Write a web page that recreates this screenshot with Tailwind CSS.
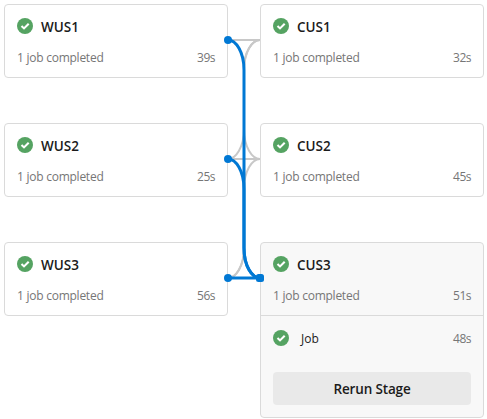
<!DOCTYPE html>
<html lang="en">
<head>
<meta charset="utf-8">
<title>Stages</title>
<script src="https://cdn.jsdelivr.net/npm/@tailwindcss/browser@4"></script>
</head>
<body class="bg-white overflow-hidden font-['Open_Sans','Noto_Sans',sans-serif] text-[#1b1b1b]">
<svg class="hidden">
  <symbol id="ok" viewBox="0 0 16 16"><circle cx="8" cy="8" r="8" fill="#55a362"/><path d="M4.5 8 7 10.4 11.7 5.7" fill="none" stroke="#fff" stroke-width="2.1"/></symbol>
</svg>
<main class="relative w-[487px] h-[419px] pl-1 pt-1 flex gap-8">
  <div class="w-56 flex flex-col gap-[45px]">
    <section class="h-[74px] rounded border border-[#dadada] px-3 pt-[13px]">
      <div class="flex items-center gap-2 h-4"><svg class="size-4"><use href="#ok"/></svg><h2 class="text-[13.5px] leading-4 font-semibold relative top-px">WUS1</h2></div>
      <div class="mt-4 flex justify-between text-xs leading-4 text-[#767676]"><span class="tracking-[-0.25px]">1 job completed</span><span class="tracking-[-0.5px]">39s</span></div>
    </section>
    <section class="h-[74px] rounded border border-[#dadada] px-3 pt-[13px]">
      <div class="flex items-center gap-2 h-4"><svg class="size-4"><use href="#ok"/></svg><h2 class="text-[13.5px] leading-4 font-semibold relative top-px">WUS2</h2></div>
      <div class="mt-4 flex justify-between text-xs leading-4 text-[#767676]"><span class="tracking-[-0.25px]">1 job completed</span><span class="tracking-[-0.5px]">25s</span></div>
    </section>
    <section class="h-[74px] rounded border border-[#dadada] px-3 pt-[13px]">
      <div class="flex items-center gap-2 h-4"><svg class="size-4"><use href="#ok"/></svg><h2 class="text-[13.5px] leading-4 font-semibold relative top-px">WUS3</h2></div>
      <div class="mt-4 flex justify-between text-xs leading-4 text-[#767676]"><span class="tracking-[-0.25px]">1 job completed</span><span class="tracking-[-0.5px]">56s</span></div>
    </section>
  </div>
  <div class="w-56 flex flex-col gap-[45px]">
    <section class="h-[74px] rounded border border-[#dadada] px-3 pt-[13px]">
      <div class="flex items-center gap-2 h-4"><svg class="size-4"><use href="#ok"/></svg><h2 class="text-[13.5px] leading-4 font-semibold relative top-px">CUS1</h2></div>
      <div class="mt-4 flex justify-between text-xs leading-4 text-[#767676]"><span class="tracking-[-0.25px]">1 job completed</span><span class="tracking-[-0.5px]">32s</span></div>
    </section>
    <section class="h-[74px] rounded border border-[#dadada] px-3 pt-[13px]">
      <div class="flex items-center gap-2 h-4"><svg class="size-4"><use href="#ok"/></svg><h2 class="text-[13.5px] leading-4 font-semibold relative top-px">CUS2</h2></div>
      <div class="mt-4 flex justify-between text-xs leading-4 text-[#767676]"><span class="tracking-[-0.25px]">1 job completed</span><span class="tracking-[-0.5px]">45s</span></div>
    </section>
    <section class="h-[176px] rounded border border-[#dadada] bg-[#f8f8f8]">
      <div class="h-[73px] border-b border-[#dadada] px-3 pt-[13px]">
        <div class="flex items-center gap-2 h-4"><svg class="size-4"><use href="#ok"/></svg><h2 class="text-[13.5px] leading-4 font-semibold relative top-px">CUS3</h2></div>
        <div class="mt-4 flex justify-between text-xs leading-4 text-[#767676]"><span class="tracking-[-0.25px]">1 job completed</span><span class="tracking-[-0.5px]">51s</span></div>
      </div>
      <div class="px-3 pt-[14px]">
        <div class="flex items-center h-4 text-xs leading-4"><svg class="size-4 mr-3"><use href="#ok"/></svg><span class="text-[#1b1b1b] relative top-px">Job</span><span class="ml-auto text-[#767676] tracking-[-0.5px] relative top-px">48s</span></div>
        <button class="mt-[26px] block w-full h-[33px] rounded-sm bg-[#e9e9e9] text-[13.5px] leading-[35px] tracking-[-0.15px] font-semibold">Rerun Stage</button>
      </div>
    </section>
  </div>
  <svg class="absolute left-0 top-0 w-[487px] h-[419px] pointer-events-none" fill="none">
    <g stroke="#c8c8c8" stroke-width="2">
      <path d="M228 40H260M228 159H260"/>
      <path d="M228 159C236 159 244 147 244 129V70C244 52 252 40 260 40"/>
      <path d="M228 278C236 278 244 266 244 248V70C244 52 252 40 260 40"/>
      <path d="M228 278C236 278 244 266 244 248V189C244 171 252 159 260 159"/>
      <path d="M228 40C236 40 244 52 244 70V129C244 147 252 159 260 159"/>
    </g>
    <g stroke="#0078d4" stroke-width="3">
      <path d="M228 40C236 40 244 52 244 70V248C244 266 252 278 260 278"/>
      <path d="M228 159C236 159 244 171 244 189V248C244 266 252 278 260 278"/>
      <path d="M228 278H260"/>
    </g>
    <g fill="#0078d4"><circle cx="228" cy="40" r="4"/><circle cx="228" cy="159" r="4"/><circle cx="228" cy="278" r="4"/><rect x="256" y="274" width="8" height="8" rx="2.5"/></g>
  </svg>
</main>
</body>
</html>
